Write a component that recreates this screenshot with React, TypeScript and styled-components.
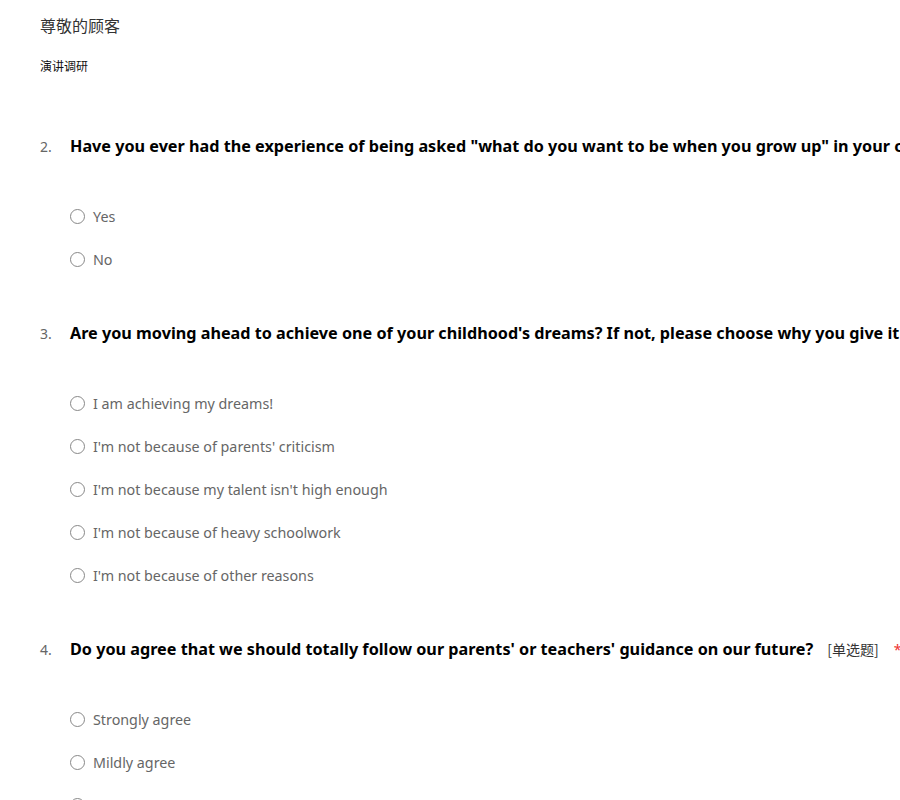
import React from "react";
import styled, { createGlobalStyle } from "styled-components";

// Type
interface Question {
  no: number;
  title: string;
  tag?: string;
  options: string[];
}

const questions: Question[] = [
  {
    no: 2,
    title:
      'Have you ever had the experience of being asked "what do you want to be when you grow up" in your childhood?',
    options: ["Yes", "No"],
  },
  {
    no: 3,
    title:
      "Are you moving ahead to achieve one of your childhood's dreams? If not, please choose why you give it up.",
    options: [
      "I am achieving my dreams!",
      "I'm not because of parents' criticism",
      "I'm not because my talent isn't high enough",
      "I'm not because of heavy schoolwork",
      "I'm not because of other reasons",
    ],
  },
  {
    no: 4,
    title:
      "Do you agree that we should totally follow our parents' or teachers' guidance on our future?",
    tag: "[单选题]",
    options: ["Strongly agree", "Mildly agree", "Disagree"],
  },
];

function App() {
  return (
    <>
      <GlobalStyle />
      <Page>
        <Header>
          <Greeting>尊敬的顾客</Greeting>
          <Subtitle>演讲调研</Subtitle>
        </Header>
        <QuestionList>
          {questions.map((q) => (
            <Block key={q.no}>
              <TitleRow>
                <Num>{q.no}.</Num>
                <Title>{q.title}</Title>
                {q.tag && <Tag>{q.tag}</Tag>}
                {q.tag && <Required>*</Required>}
              </TitleRow>
              <Options>
                {q.options.map((o) => (
                  <Option key={o}>
                    <Radio />
                    <Label>{o}</Label>
                  </Option>
                ))}
              </Options>
            </Block>
          ))}
        </QuestionList>
      </Page>
    </>
  );
}

export default App;

const GlobalStyle = createGlobalStyle`
  html, body {
    margin: 0;
    padding: 0;
    overflow: hidden;
    background: #fff;
  }
  body {
    font-family: "Noto Sans", "Noto Sans CJK SC", sans-serif;
  }
`;

const Page = styled.div`
  padding: 0 40px;
  white-space: nowrap;
`;

const Header = styled.div`
  display: flex;
  flex-direction: column;
  padding-top: 14px;
  gap: 22px;
`;

const Greeting = styled.div`
  font-size: 16px;
  line-height: 22px;
  color: #333;
  font-family: "Noto Sans CJK SC", sans-serif;
`;

const Subtitle = styled.div`
  font-size: 12px;
  line-height: 16px;
  color: #111;
  font-family: "Noto Sans CJK SC", sans-serif;
`;

const QuestionList = styled.div`
  display: flex;
  flex-direction: column;
  gap: 50px;
  padding-top: 60px;
`;

const Block = styled.div`
  display: flex;
  flex-direction: column;
`;

const TitleRow = styled.div`
  display: flex;
  align-items: center;
  height: 24px;
`;

const Num = styled.span`
  width: 30px;
  flex-shrink: 0;
  font-size: 14px;
  color: #666;
`;

const Title = styled.span`
  font-size: 16.2px;
  font-weight: 700;
  color: #000;
`;

const Tag = styled.span`
  margin-left: 14px;
  font-size: 14px;
  color: #333;
  font-family: "Noto Sans CJK SC", sans-serif;
`;

const Required = styled.span`
  margin-left: 15px;
  font-size: 14px;
  color: #e33;
`;

const Options = styled.div`
  display: flex;
  flex-direction: column;
  gap: 19px;
  padding: 46px 0 0 30px;
`;

const Option = styled.label`
  display: flex;
  align-items: center;
  gap: 8px;
  height: 24px;
`;

const Radio = styled.span`
  width: 13px;
  height: 13px;
  border: 1px solid #888;
  border-radius: 50%;
  flex-shrink: 0;
`;

const Label = styled.span`
  font-size: 14.3px;
  color: #666;
`;
